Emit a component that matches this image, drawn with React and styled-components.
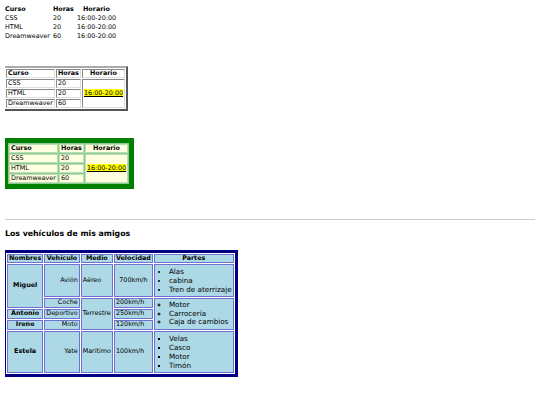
import React from 'react';
import styled, { createGlobalStyle, css } from 'styled-components';

const Global = createGlobalStyle`
  body {
    margin: 4px 5px;
    font-family: "DejaVu Sans", Verdana, sans-serif;
    font-size: 6.4px;
    color: #000;
    background: #fff;
  }
`;

const PlainTable = styled.table`
  border-collapse: separate;
  border-spacing: 1px;
  margin-left: -2px;
  th { text-align: left; }
  th, td { padding: 0 1px; }
  th:last-child { text-align: center; }
`;

const BoxTable = styled.table`
  border-collapse: separate;
  border-spacing: 1px;
  margin: 25px 0 0 -2px;
  border: 2px solid;
  border-color: #aaa #555 #555 #aaa;
  background: #fff;
  th, td {
    border: 1px solid;
    border-color: #888 #ddd #ddd #888;
    padding: 0 1px;
    line-height: 7px;
    text-align: left;
  }
  th:last-child { text-align: center; }

  ${p =>
    p.green &&
    css`
      margin-top: 27px;
      border: 5px solid #008000;
      background: #90c890;
      th, td {
        background: #ffffe0;
        border-color: #b8e0b8;
      }
    `};
`;

const Mark = styled.span`
  background: #ffff00;
  text-decoration: underline;
`;

const Rule = styled.hr`
  margin: 30px 0 0;
  border: none;
  border-top: 1px solid #ccc;
`;

const Heading = styled.h3`
  font-size: 7.8px;
  margin: 9px 0 12px;
`;

const CarTable = styled.table`
  border-collapse: separate;
  border-spacing: 1px;
  margin-left: -2px;
  border: 3px solid #000080;
  background: #fff;
  th, td {
    background: #add8e6;
    border: 1px solid #7070d0;
    padding: 0 1px;
    line-height: 7px;
  }
  th { text-align: center; }
`;

const Cell = styled.td`
  text-align: ${p => p.align || 'left'};
  font-weight: ${p => (p.bold ? 'bold' : 'normal')};
`;

const Parts = styled.ul`
  margin: 2px 0;
  padding-left: 13px;
  font-size: 7.2px;
  list-style-type: ${p => p.type || 'disc'};
  li { line-height: ${p => (p.tight ? '8.5px' : '9px')}; }
`;

const cursos = [
  ['CSS', '20'],
  ['HTML', '20'],
  ['Dreamweaver', '60'],
];

function Cursos({ Table, green }) {
  return (
    <Table green={green}>
      <tbody>
        <tr>
          <th>Curso</th>
          <th>Horas</th>
          <th>Horario</th>
        </tr>
        {cursos.map(([c, h], i) => (
          <tr key={c}>
            <td>{c}</td>
            <td>{h}</td>
            {i === 0 && (
              <td rowSpan={3}>
                <Mark>16:00-20:00</Mark>
              </td>
            )}
          </tr>
        ))}
      </tbody>
    </Table>
  );
}

export default function App() {
  return (
    <>
      <Global />
      <PlainTable>
        <tbody>
          <tr>
            <th>Curso</th>
            <th>Horas</th>
            <th>Horario</th>
          </tr>
          {cursos.map(([c, h]) => (
            <tr key={c}>
              <td>{c}</td>
              <td>{h}</td>
              <td>16:00-20:00</td>
            </tr>
          ))}
        </tbody>
      </PlainTable>

      <Cursos Table={BoxTable} />
      <Cursos Table={BoxTable} green />

      <Rule />
      <Heading>Los vehículos de mis amigos</Heading>

      <CarTable>
        <tbody>
          <tr>
            <th>Nombres</th>
            <th>Vehículo</th>
            <th>Medio</th>
            <th>Velocidad</th>
            <th>Partes</th>
          </tr>
          <tr>
            <Cell rowSpan={2} bold align="center">Miguel</Cell>
            <Cell align="right">Avión</Cell>
            <Cell>Aéreo</Cell>
            <Cell align="center">700km/h</Cell>
            <Cell>
              <Parts>
                <li>Alas</li>
                <li>cabina</li>
                <li>Tren de aterrizaje</li>
              </Parts>
            </Cell>
          </tr>
          <tr>
            <Cell align="right">Coche</Cell>
            <Cell rowSpan={3}>Terrestre</Cell>
            <Cell>200km/h</Cell>
            <Cell rowSpan={3}>
              <Parts type="circle" tight>
                <li>Motor</li>
                <li>Carrocería</li>
                <li>Caja de cambios</li>
              </Parts>
            </Cell>
          </tr>
          <tr>
            <Cell bold align="center">Antonio</Cell>
            <Cell align="right">Deportivo</Cell>
            <Cell>250km/h</Cell>
          </tr>
          <tr>
            <Cell bold align="center">Irene</Cell>
            <Cell align="right">Moto</Cell>
            <Cell>120km/h</Cell>
          </tr>
          <tr>
            <Cell bold align="center">Estela</Cell>
            <Cell align="right">Yate</Cell>
            <Cell>Marítimo</Cell>
            <Cell>100km/h</Cell>
            <Cell>
              <Parts type="square">
                <li>Velas</li>
                <li>Casco</li>
                <li>Motor</li>
                <li>Timón</li>
              </Parts>
            </Cell>
          </tr>
        </tbody>
      </CarTable>
    </>
  );
}
